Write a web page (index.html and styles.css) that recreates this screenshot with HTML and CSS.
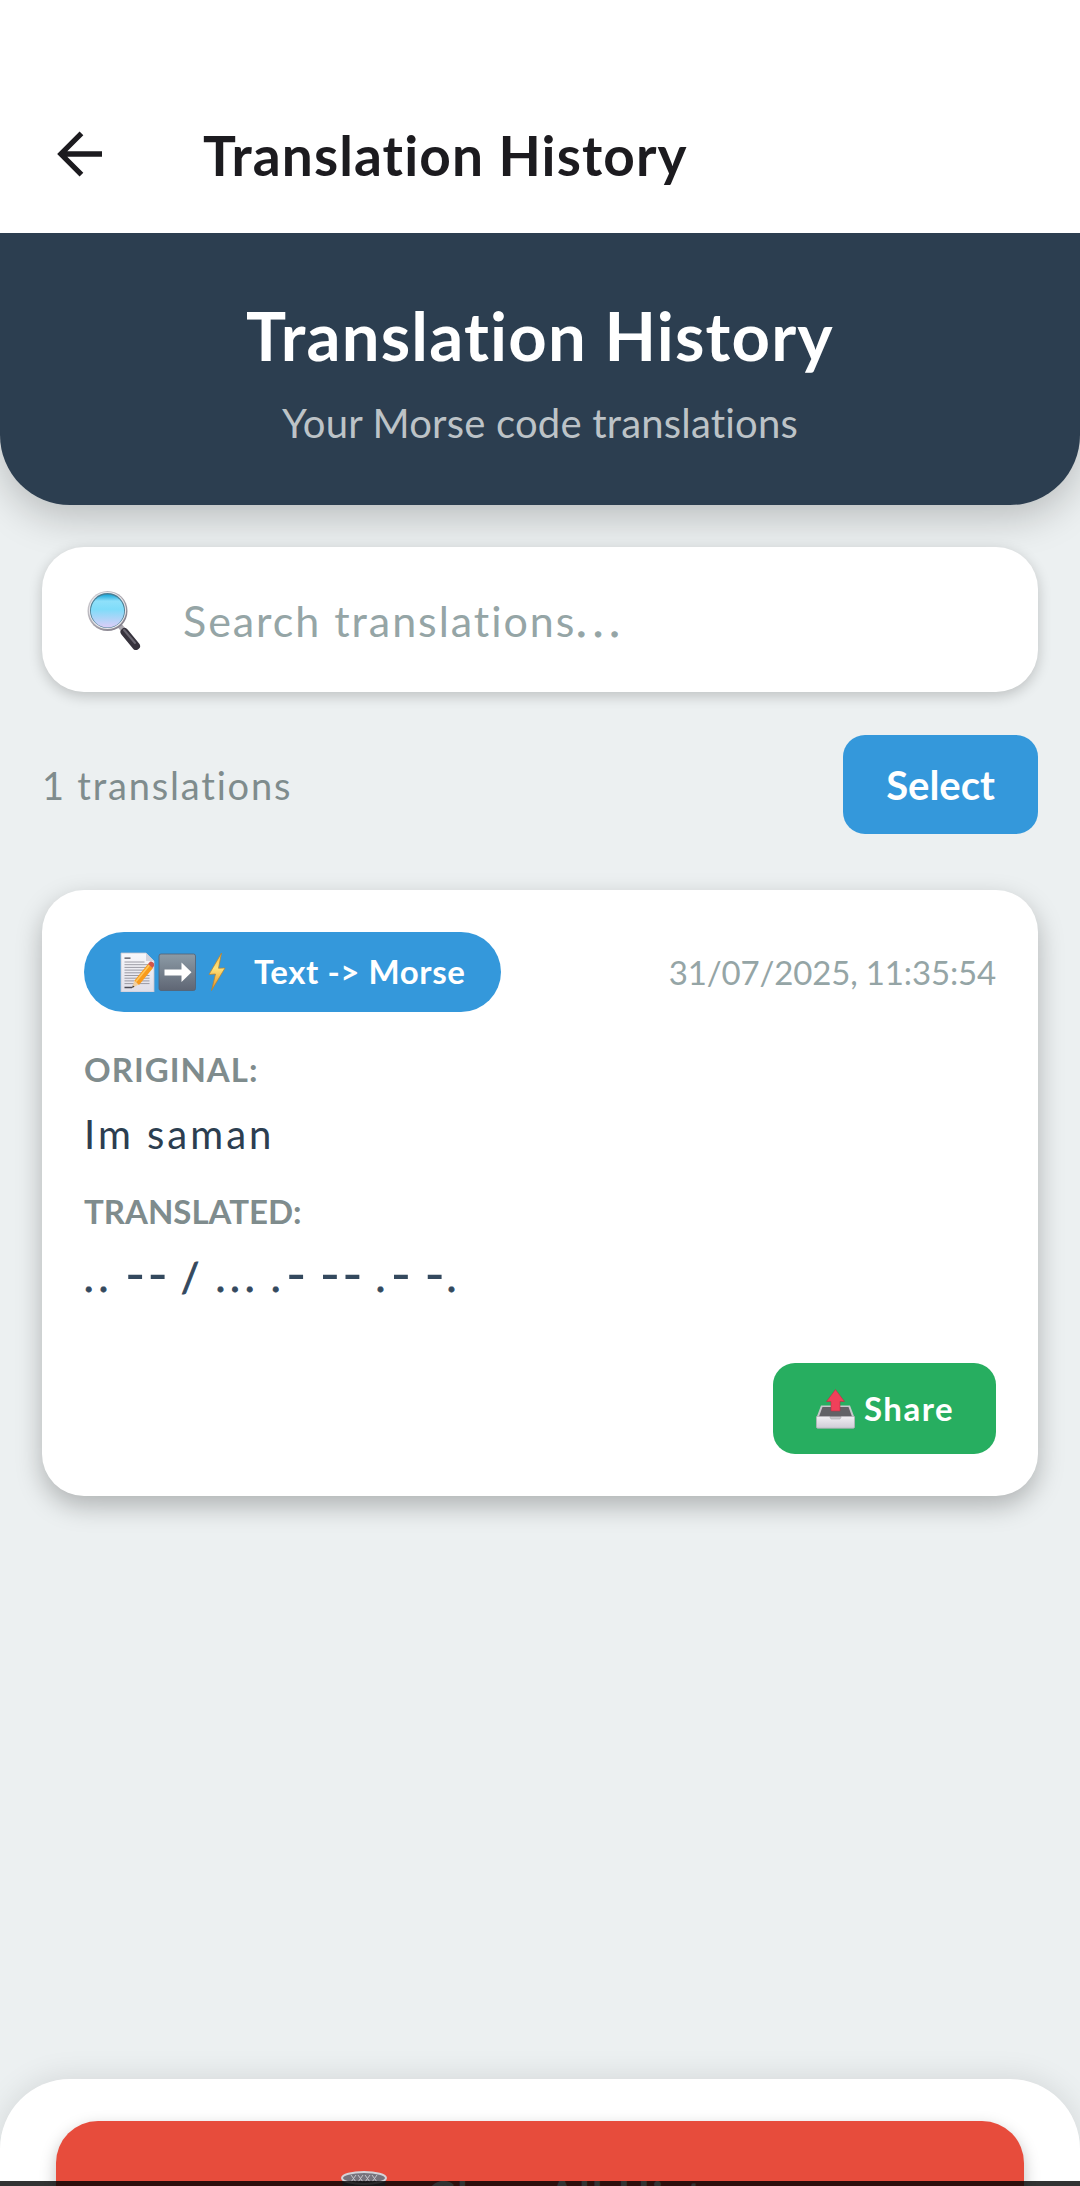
FILE: index.html
```html
<!DOCTYPE html>
<html lang="en">
<head>
<meta charset="utf-8">
<title>Translation History</title>
<link rel="stylesheet" href="styles.css">
</head>
<body>
<div class="screen">
  <header class="appbar">
    <svg class="back" viewBox="0 0 46 46"><path d="M46 23H4M25 2L4 23l21 21" fill="none" stroke="#1c1b1f" stroke-width="5.4"/></svg>
    <h1 class="appbar-title"><span>Translation History</span></h1>
  </header>
  <section class="hero">
    <h2 class="hero-title"><span>Translation History</span></h2>
    <p class="hero-sub"><span>Your Morse code translations</span></p>
  </section>
  <main class="content">
    <div class="search">
      <svg class="search-icon" viewBox="0 0 54 60">
        <defs>
          <linearGradient id="lens" x1="0" y1="0" x2="0" y2="1"><stop offset="0" stop-color="#16a5d8"/><stop offset=".2" stop-color="#8fe0fa"/><stop offset=".45" stop-color="#7fdcf9"/><stop offset="1" stop-color="#dccdf7"/></linearGradient>
          <linearGradient id="rim" x1="0" y1="0" x2="1" y2="1"><stop offset="0" stop-color="#d8d6da"/><stop offset="1" stop-color="#77737f"/></linearGradient>
        </defs>
        <path d="M33 36l6 7" stroke="#aaa7ae" stroke-width="5"/>
        <path d="M37.500 42L49 56" stroke="#37333d" stroke-width="8" stroke-linecap="round"/>
        <path d="M37 40L48 53" stroke="#6a6670" stroke-width="2" stroke-linecap="round"/>
        <circle cx="20.500" cy="21" r="20" fill="url(#rim)"/>
        <circle cx="20.500" cy="20.500" r="18.600" fill="#e9e8ec"/>
        <circle cx="20.500" cy="20.500" r="17.500" fill="#4a7f95"/>
        <circle cx="20.500" cy="21" r="16.600" fill="url(#lens)"/>
      </svg>
      <span class="search-text">Search translations<span class="dots">...</span></span>
    </div>
    <div class="toolbar">
      <span class="count">1 translations</span>
      <button class="select"><span>Select</span></button>
    </div>
    <article class="card">
      <div class="card-head">
        <div class="badge">
          <svg class="badge-icons" viewBox="0 0 108 40">
            <defs>
              <linearGradient id="tile" x1="0" y1="0" x2="0" y2="1"><stop offset="0" stop-color="#8c9ba6"/><stop offset="1" stop-color="#5f6674"/></linearGradient>
              <linearGradient id="paper" x1="0" y1="0" x2="0" y2="1"><stop offset="0" stop-color="#f8f8fb"/><stop offset="1" stop-color="#dfdee8"/></linearGradient>
              <linearGradient id="bolt" x1="0" y1="0" x2="0" y2="1"><stop offset="0" stop-color="#f7b43a"/><stop offset=".4" stop-color="#ffe37a"/><stop offset="1" stop-color="#e58a1c"/></linearGradient>
            </defs>
            <path d="M1 1h25l8 8v31H1z" fill="url(#paper)" stroke="#c4c3ce" stroke-width=".8"/>
            <path d="M26 1v8h8z" fill="#d4d3dc"/>
            <path d="M4.500 6.200h6M12 35.500h-7.500" stroke="#4b4b55" stroke-width="1.300"/>
            <path d="M4.500 10h20M4.500 12.700h25M4.500 15.400h25M4.500 18.100h24M4.500 20.800h23M4.500 23.500h25M4.500 26.200h25M4.500 28.900h25M4.500 31.600h25" stroke="#85858f" stroke-width=".8"/>
            <path d="M12 36l2.500-8 4.500 4.500z" fill="#f0cfa0"/>
            <path d="M14.500 28.500L28 12l5 4-14 17z" fill="#f99b1c"/>
            <path d="M16 29.500L29.500 13" stroke="#ffc65b" stroke-width="1.500"/>
            <path d="M28 12l2-2.300q2-1 4 1.800v2.500l-1.500 2z" fill="#d2564b"/>
            <path d="M12 36l.8-2.500 1.700 1.300z" fill="#333"/>
            <rect x="39" y="2" width="36.500" height="36.500" rx="2" fill="url(#tile)" stroke="#566171" stroke-width=".8"/>
            <path d="M44.500 17.500h17v-7l10 9.800-10 9.800v-6.500h-17z" fill="#fff"/>
            <path d="M101.500 1L89 22.500l6.500-.5-4 16.500L105 16l-6.500.3z" fill="url(#bolt)" stroke="#b7812d" stroke-width=".7"/>
          </svg>
          <span class="badge-text">Text -&gt; Morse</span>
        </div>
        <time class="date">31/07/2025, 11:35:54</time>
      </div>
      <div class="label original"><span>ORIGINAL:</span></div>
      <div class="value plain"><span>Im saman</span></div>
      <div class="label translated"><span>TRANSLATED:</span></div>
      <div class="value morse">.. <span class="dash">--</span> / ... .<span class="dash">-</span> <span class="dash">--</span> .<span class="dash">-</span> <span class="dash">-</span>.</div>
      <div class="actions">
        <button class="share">
          <svg class="share-icon" viewBox="0 0 39 40">
            <defs><linearGradient id="tray" x1="0" y1="0" x2="0" y2="1"><stop offset="0" stop-color="#f1eff3"/><stop offset="1" stop-color="#cfccd6"/></linearGradient></defs>
            <path d="M5 16.500h29l4.500 12v9.500q0 1.200-1.200 1.200H1.700Q.5 39.200.5 38v-9.500z" fill="#c8c7cb"/>
            <path d="M6.500 18h26l3.500 9.500H3z" fill="#626166"/>
            <path d="M.5 27.500h13l1.500 2.500h9l1.500-2.500h13V38q0 1.200-1.200 1.200H1.700Q.5 39.200.5 38z" fill="url(#tray)" stroke="#a9a7ae" stroke-width=".6"/>
            <path d="M19.500.5l9 12H24v9.500h-9V12.500h-4.500z" fill="#f0405a" stroke="#bb2f43" stroke-width=".6"/>
          </svg>
          <span class="share-text">Share</span>
        </button>
      </div>
    </article>
  </main>
  <footer class="sheet">
    <button class="clear">
      <svg class="trash" viewBox="0 0 46 56">
        <path d="M1 7l5 47h34l5-47z" fill="#77757c"/>
        <ellipse cx="23" cy="7" rx="22" ry="6" fill="#77737c" stroke="#d5d3d8" stroke-width="2"/>
        <path d="M10 4l5 7M15 4l-5 7M17 4l5 7M22 4l-5 7M24 4l5 7M29 4l-5 7M31 4l5 7M36 4l-5 7" stroke="#c7c5cb" stroke-width="1"/>
      </svg>
      <span class="clear-text">Clear All History</span>
    </button>
  </footer>
  <div class="navbar"></div>
</div>
</body>
</html>
```
FILE: styles.css
```css
* { box-sizing: border-box; margin: 0; padding: 0; }
body { background: #ecf0f1; font-family: Lato, "Open Sans", sans-serif; font-variant-ligatures: none; }
button { border: 0; font: inherit; color: #fff; }
svg { display: block; flex: none; }
span, time { white-space: nowrap; }

.screen { position: relative; display: flex; flex-direction: column; width: 1080px; height: 2186px; overflow: hidden; background: #ecf0f1; }

.appbar { position: relative; z-index: 1; display: flex; align-items: center; flex: none; height: 233px; padding: 77px 57px 0; background: #fff; }
.back { width: 45px; height: 46px; margin-top: -2px; }
.appbar-title { margin-left: 101px; font-size: 55px; line-height: 72px; font-weight: 700; letter-spacing: 1.1px; color: #1c1b1f; }

.hero { flex: none; height: 275px; margin-top: -3px; padding-top: 66px; text-align: center; background: #2c3e50; border-radius: 0 0 70px 70px; box-shadow: 0 12px 40px rgba(0, 0, 0, .22); }
.hero-title { font-size: 67px; line-height: 78px; font-weight: 700; color: #fff; letter-spacing: 1.2px; }
.hero-sub { margin-top: 22px; font-size: 40px; line-height: 54px; letter-spacing: .2px; color: #bdc3c7; }

.content { flex: 1; padding: 42px 42px 0; }
.search { display: flex; align-items: center; height: 145px; padding-left: 45px; background: #fff; border-radius: 42px; box-shadow: 0 4px 14px rgba(0, 0, 0, .2); }
.search-icon { width: 54px; height: 60px; }
.search-text { margin: 3px 0 0 42px; font-size: 43px; line-height: 56px; letter-spacing: 1.95px; color: #95a5a6; }
.dots { letter-spacing: 6.5px; -webkit-text-stroke: 1px #95a5a6; }

.toolbar { display: flex; align-items: center; justify-content: space-between; height: 99px; margin-top: 43px; }
.count { font-size: 38px; line-height: 50px; letter-spacing: 1.8px; color: #7f8c8d; }
.select { width: 195px; height: 99px; border-radius: 22px; background: #3498db; font-size: 40px; font-weight: 700; }

.card { height: 606px; margin-top: 56px; padding: 42px; background: #fff; border-radius: 42px; box-shadow: 0 10px 26px rgba(0, 0, 0, .26); }
.card-head { display: flex; align-items: center; justify-content: space-between; height: 80px; }
.badge { display: flex; align-items: center; width: 417px; height: 80px; padding-left: 35px; border-radius: 40px; background: #3498db; }
.badge-icons { width: 110px; height: 40px; }
.badge-text { margin: -2px 0 0 25px; font-size: 33px; font-weight: 700; letter-spacing: .55px; color: #fff; }
.date { font-size: 33px; letter-spacing: -.15px; color: #95a5a6; }
.label { font-size: 33px; line-height: 42px; font-weight: 700; color: #7f8c8d; }
.original { margin-top: 36px; letter-spacing: 1px; }
.value { font-size: 40px; line-height: 54px; color: #2c3e50; }
.plain { margin-top: 17px; letter-spacing: 3px; }
.translated { margin-top: 29px; }
.morse { height: 54px; margin-top: 18px; letter-spacing: 5.2px; word-spacing: -4px; color: #34495e; -webkit-text-stroke: 1px #34495e; }
.dash { font-size: 56px; line-height: 0; letter-spacing: 1.6px; vertical-align: -2px; -webkit-text-stroke: 0; }
.actions { display: flex; justify-content: flex-end; margin-top: 59px; }
.share { display: flex; align-items: center; width: 223px; height: 91px; padding-left: 43px; border-radius: 22px; background: #27ae60; }
.share-icon { width: 39px; height: 40px; }
.share-text { margin: -2px 0 0 9px; font-size: 33px; font-weight: 700; letter-spacing: 1.5px; }

.sheet { flex: none; height: 107px; padding: 42px 56px 0; background: #fff; border-radius: 70px 70px 0 0; box-shadow: 0 -2px 30px rgba(0, 0, 0, .1); }
.clear { display: flex; align-items: flex-start; width: 968px; height: 150px; padding: 50px 0 0 285px; border-radius: 42px; background: #e74c3c; box-shadow: 0 6px 16px rgba(0, 0, 0, .25); }
.trash { width: 46px; height: 56px; }
.clear-text { margin: -3px 0 0 40px; font-size: 42px; line-height: 56px; font-weight: 700; letter-spacing: 2.5px; }
.navbar { position: absolute; left: 0; right: 0; bottom: 0; height: 5px; background: rgba(0, 0, 0, .8); }
```
